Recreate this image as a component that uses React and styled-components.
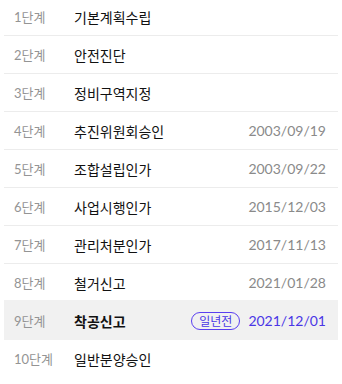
import React from "react";
import styled, { createGlobalStyle } from "styled-components";

const Global = createGlobalStyle`
  html, body { margin: 0; padding: 0; background: #fff; }
  body { font-family: Lato, "Noto Sans CJK KR", sans-serif; overflow: hidden; }
`;

const List = styled.ul`
  list-style: none;
  margin: -2px 4px 0;
  padding: 0;
`;

const Row = styled.li`
  display: flex;
  align-items: center;
  height: 37px;
  padding: 0 12px 0 10px;
  border-bottom: 1px solid ${(p) => (p.$active ? "#f1f1f1" : "#ececec")};
  background: ${(p) => (p.$active ? "#f1f1f1" : "transparent")};
  box-shadow: ${(p) => (p.$active ? "0 -2px 0 #f1f1f1" : "none")};
  &:last-child { border-bottom: none; }
`;

const Step = styled.span`
  width: 60px;
  flex: none;
  font-size: 13px;
  color: #949494;
  font-family: Lato, "Noto Sans CJK KR", sans-serif;
`;

const Name = styled.span`
  flex: 1;
  font-size: 14px;
  color: #111;
  font-weight: ${(p) => (p.$active ? 700 : 400)};
  font-family: "Noto Sans CJK KR", sans-serif;
`;

const Badge = styled.span`
  display: inline-flex;
  align-items: center;
  justify-content: center;
  box-sizing: border-box;
  height: 18px;
  padding: 0 7px;
  margin-right: 8px;
  border: 1px solid #5a3ff0;
  border-radius: 9px;
  color: #4a36e6;
  font-size: 12px;
  font-family: "Noto Sans CJK KR", sans-serif;
`;

const DateText = styled.span`
  font-size: 14px;
  font-family: Lato, sans-serif;
  color: ${(p) => (p.$active ? "#4a36e6" : "#8a8a8a")};
`;

const steps = [
  { name: "기본계획수립" },
  { name: "안전진단" },
  { name: "정비구역지정" },
  { name: "추진위원회승인", date: "2003/09/19" },
  { name: "조합설립인가", date: "2003/09/22" },
  { name: "사업시행인가", date: "2015/12/03" },
  { name: "관리처분인가", date: "2017/11/13" },
  { name: "철거신고", date: "2021/01/28" },
  { name: "착공신고", date: "2021/12/01", active: true, badge: "일년전" },
  { name: "일반분양승인" },
];

export default function App() {
  return (
    <>
      <Global />
      <List>
        {steps.map((s, i) => (
          <Row key={i} $active={s.active}>
            <Step>{i + 1}단계</Step>
            <Name $active={s.active}>{s.name}</Name>
            {s.badge && <Badge>{s.badge}</Badge>}
            {s.date && <DateText $active={s.active}>{s.date}</DateText>}
          </Row>
        ))}
      </List>
    </>
  );
}
